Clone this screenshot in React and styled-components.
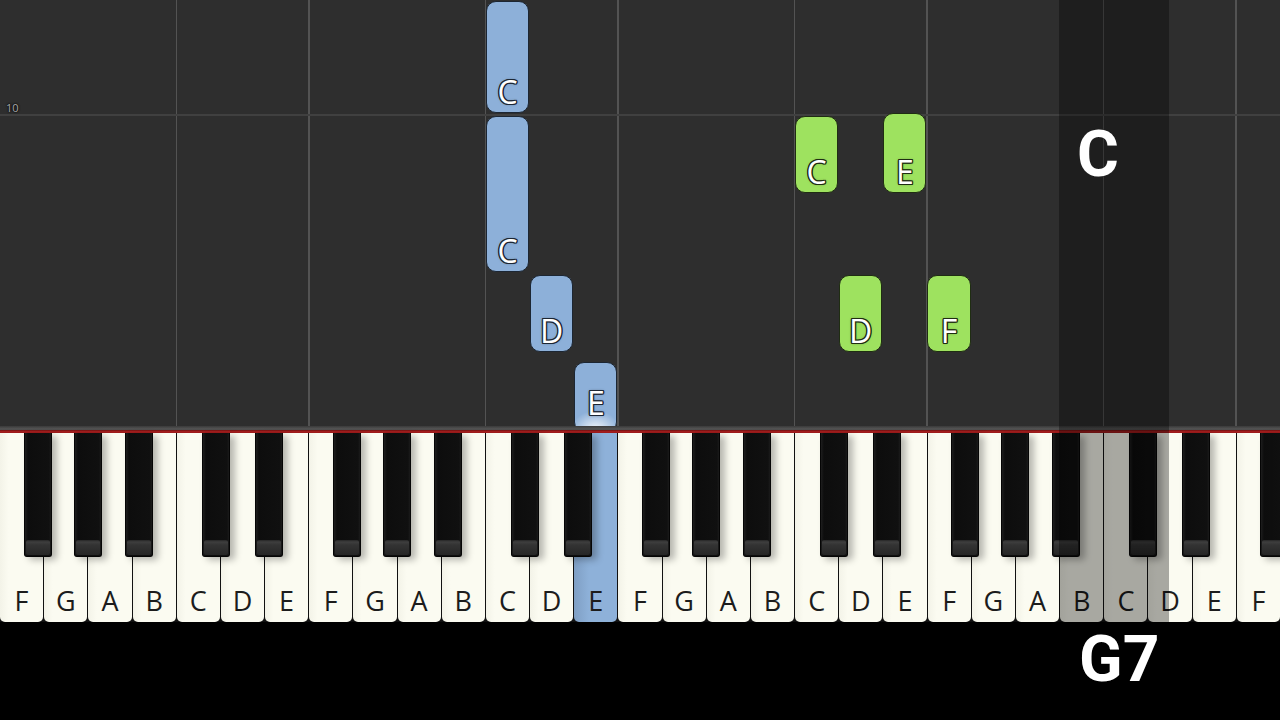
import React from "react";
import styled, { createGlobalStyle } from "styled-components";

const KEY_COUNT = 29;
const KEY_W = 1280 / KEY_COUNT;
const LETTERS = ["F", "G", "A", "B", "C", "D", "E"];

// offset of each black key centre from the white-key boundary it sits on
const BLACK_OFFSETS = { F: -6.5, G: 0, A: 6.5, C: -4.5, D: 4.5 };

const whiteKeys = Array.from({ length: KEY_COUNT }, (_, i) => ({
  id: i,
  letter: LETTERS[i % 7],
}));

const blackKeys = whiteKeys
  .filter((k) => BLACK_OFFSETS[k.letter] !== undefined)
  .map((k) => ({
    id: k.id,
    center: (k.id + 1) * KEY_W + BLACK_OFFSETS[k.letter],
  }));

const gridLines = whiteKeys
  .filter((k) => k.id > 0 && (k.letter === "C" || k.letter === "F"))
  .map((k) => k.id * KEY_W);

const notes = [
  { id: 1, key: 11, top: 1, bottom: 113, label: "C", tone: "blue" },
  { id: 2, key: 11, top: 116, bottom: 272, label: "C", tone: "blue" },
  { id: 3, key: 12, top: 275, bottom: 352, label: "D", tone: "blue" },
  { id: 4, key: 13, top: 362, bottom: 432, label: "E", tone: "blue", playing: true },
  { id: 5, key: 18, top: 116, bottom: 193, label: "C", tone: "green" },
  { id: 6, key: 20, top: 113, bottom: 193, label: "E", tone: "green" },
  { id: 7, key: 19, top: 275, bottom: 352, label: "D", tone: "green" },
  { id: 8, key: 21, top: 275, bottom: 352, label: "F", tone: "green" },
];

const TONES = {
  blue: { fill: "#8db0d9", edge: "#1c2633" },
  green: { fill: "#9ee25f", edge: "#1f2d12" },
};

const ACTIVE_KEY = 13;

function App() {
  return (
    <>
      <GlobalStyle />
      <Stage>
        <Roll>
          {gridLines.map((x) => (
            <GridLine key={x} $x={x} />
          ))}
          <BarLine />
          <MeasureNumber>10</MeasureNumber>
          {notes.map((n) => (
            <Note
              key={n.id}
              $x={n.key * KEY_W}
              $top={n.top}
              $height={n.bottom - n.top}
              $tone={n.tone}
              $playing={n.playing}
            >
              <NoteLabel $tone={n.tone}>{n.label}</NoteLabel>
            </Note>
          ))}
        </Roll>

        <Rail />

        <Keyboard>
          {whiteKeys.map((k) => (
            <WhiteKey key={k.id} $active={k.id === ACTIVE_KEY}>
              <KeyLabel>{k.letter}</KeyLabel>
            </WhiteKey>
          ))}
          {blackKeys.map((k) => (
            <BlackKey key={k.id} $center={k.center} />
          ))}
        </Keyboard>

        <ChordBar>
          <ChordName>G7</ChordName>
        </ChordBar>

        <ChordRegion>
          <ChordName>C</ChordName>
        </ChordRegion>
      </Stage>
    </>
  );
}

const GlobalStyle = createGlobalStyle`
  html, body {
    margin: 0;
    padding: 0;
    background: #000;
    overflow: hidden;
  }
`;

const Stage = styled.div`
  position: relative;
  width: 1280px;
  height: 720px;
  display: flex;
  flex-direction: column;
  background: #000;
  overflow: hidden;
`;

const Roll = styled.div`
  position: relative;
  height: 426px;
  flex: none;
  background: #2e2e2e;
  overflow: hidden;
`;

const GridLine = styled.div`
  position: absolute;
  top: 0;
  bottom: 0;
  left: ${(p) => p.$x - 0.75}px;
  width: 1.5px;
  background: #535353;
`;

const BarLine = styled.div`
  position: absolute;
  left: 0;
  right: 0;
  top: 114px;
  height: 1.5px;
  background: #404040;
`;

const MeasureNumber = styled.span`
  position: absolute;
  left: 6px;
  top: 100px;
  font-family: "Open Sans", "DejaVu Sans", sans-serif;
  font-size: 11px;
  color: #a8a8a8;
  text-shadow: 0 0 2px #000, 0 0 2px #000;
`;

const Note = styled.div`
  position: absolute;
  left: ${(p) => p.$x + 0.5}px;
  top: ${(p) => p.$top}px;
  width: ${KEY_W - 1}px;
  height: ${(p) => p.$height}px;
  box-sizing: border-box;
  border: 1.5px solid ${(p) => TONES[p.$tone].edge};
  border-radius: 10px;
  background: ${(p) =>
    p.$playing
      ? `radial-gradient(ellipse 60% 30% at 50% 100%, rgba(255,255,255,0.95), rgba(255,255,255,0) 100%), ${TONES[p.$tone].fill}`
      : TONES[p.$tone].fill};
  display: flex;
  align-items: flex-end;
  justify-content: center;
  padding-bottom: ${(p) => (p.$playing ? 12 : 4)}px;
`;

const NoteLabel = styled.span`
  font-family: "Open Sans", "DejaVu Sans", sans-serif;
  font-weight: 400;
  font-size: 32px;
  line-height: 1;
  color: #fff;
  text-shadow: ${(p) => {
    const c = TONES[p.$tone].edge;
    return `-1.2px 0 ${c}, 1.2px 0 ${c}, 0 -1.2px ${c}, 0 1.2px ${c},
      -1px -1px ${c}, 1px 1px ${c}, -1px 1px ${c}, 1px -1px ${c}, 0 0 3px rgba(0,0,0,0.5)`;
  }};
`;

const Rail = styled.div`
  height: 7px;
  flex: none;
  background: linear-gradient(
    #3a3a3a 0,
    #555 3px,
    #4a4a4a 4px,
    #6d1010 4px,
    #b22222 6px,
    #8c1414 7px
  );
`;

const Keyboard = styled.div`
  position: relative;
  height: 189px;
  flex: none;
  display: flex;
  gap: 1px;
  background: #111;
`;

const WhiteKey = styled.div`
  flex: 1;
  display: flex;
  align-items: flex-end;
  justify-content: center;
  border-radius: 0 0 5px 5px;
  background: ${(p) =>
    p.$active
      ? "linear-gradient(90deg, #7f9fc4, #8eb1d9 35%, #8eb1d9)"
      : "linear-gradient(90deg, #f3f3e8, #fbfbf1 20%, #fbfbf1)"};
`;

const KeyLabel = styled.span`
  font-family: "Open Sans", "DejaVu Sans", sans-serif;
  font-size: 27px;
  line-height: 1;
  color: #1c1c1c;
  padding-bottom: 8px;
`;

const BlackKey = styled.div`
  position: absolute;
  top: 0;
  left: ${(p) => p.$center - 14}px;
  width: 28px;
  height: 124px;
  box-sizing: border-box;
  border: 1px solid #050505;
  border-top: none;
  border-radius: 0 0 3px 3px;
  background: linear-gradient(90deg, #1d1d1d 0, #0d0d0d 3px, #101010 24px, #202020 27px),
    #111;
  box-shadow: 5px 3px 7px rgba(0, 0, 0, 0.28);

  &::after {
    content: "";
    position: absolute;
    left: 1px;
    right: 1px;
    bottom: 1px;
    height: 15px;
    border-radius: 2px;
    background: linear-gradient(#262626 0, #3e3e3e 2px, #333 5px, #262626 100%);
  }
`;

const ChordBar = styled.div`
  flex: 1;
  background: #000;
  padding: 6px 0 0 1079px;
`;

const ChordName = styled.div`
  font-family: Roboto, "Liberation Sans", sans-serif;
  font-weight: 700;
  font-size: 64px;
  line-height: 1;
  color: #fff;
`;

const ChordRegion = styled.div`
  position: absolute;
  left: 1059px;
  top: 0;
  width: 110px;
  height: 622px;
  box-sizing: border-box;
  padding: 123px 0 0 18px;
  background: rgba(0, 0, 0, 0.33);
  pointer-events: none;
`;

export default App;
